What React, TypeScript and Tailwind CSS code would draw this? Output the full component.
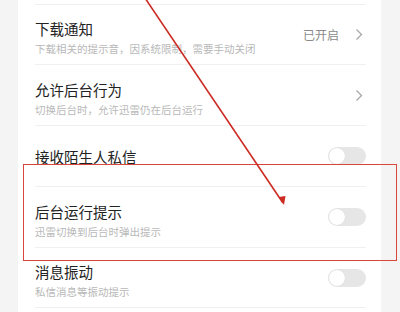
import React from "react";

const Toggle = () => (
  <div className="w-[38px] h-[18px] rounded-full bg-[#e6e6e6] relative shrink-0">
    <div className="absolute left-[1px] top-[1px] w-[16px] h-[16px] rounded-full bg-white shadow-[0_0_1px_rgba(0,0,0,0.15)]" />
  </div>
);

const Chevron = () => (
  <svg width="8" height="13" viewBox="0 0 8 13" className="shrink-0">
    <path d="M1.5 1.5 L6.5 6.5 L1.5 11.5" fill="none" stroke="#a8a8a8" strokeWidth="1.3" />
  </svg>
);

type RowProps = {
  title: string;
  sub?: string;
  right: React.ReactNode;
  h: string;
};

const Row = ({ title, sub, right, h }: RowProps) => (
  <div className={`flex items-center border-b border-[#f0f0f0] ${h}`}>
    <div className={`flex-1 flex flex-col ${sub ? "pt-[6px]" : "pt-[1px]"}`}>
      <div className="text-[14.5px] leading-[20px] text-[#222]">{title}</div>
      {sub && (
        <div className="text-[10.5px] leading-[14px] mt-[3px] text-[#b8b8b8]">{sub}</div>
      )}
    </div>
    {right}
  </div>
);

export default function App() {
  return (
    <div
      className="relative w-[400px] h-[312px] overflow-hidden bg-[#f4f4f4] flex"
      style={{ fontFamily: '"Noto Sans CJK SC", "Noto Sans", sans-serif' }}
    >
      <div className="w-[18px] shrink-0" />
      <div className="w-[363px] bg-white pl-[17px] pr-[15px] flex flex-col">
        <div className="h-[5px] border-b border-[#f0f0f0] shrink-0" />
        <Row
          title="下载通知"
          sub="下载相关的提示音，因系统限制，需要手动关闭"
          h="h-[60px]"
          right={
            <div className="flex items-center gap-[16px] pr-[3px]">
              <span className="text-[12px] text-[#8a8a8a]">已开启</span>
              <Chevron />
            </div>
          }
        />
        <Row
          title="允许后台行为"
          sub="切换后台时，允许迅雷仍在后台运行"
          h="h-[61px]"
          right={
            <div className="pr-[3px]">
              <Chevron />
            </div>
          }
        />
        <Row title="接收陌生人私信" h="h-[61px]" right={<Toggle />} />
        <Row
          title="后台运行提示"
          sub="迅雷切换到后台时弹出提示"
          h="h-[61px]"
          right={<Toggle />}
        />
        <Row
          title="消息振动"
          sub="私信消息等振动提示"
          h="h-[60px]"
          right={<Toggle />}
        />
      </div>

      <div className="absolute left-[23px] top-[164px] w-[374px] h-[97px] border-[1.5px] border-[#d9463d]" />

      <svg className="absolute left-0 top-0" width="400" height="312" viewBox="0 0 400 312">
        <line x1="145" y1="-2" x2="283" y2="203" stroke="#cc2b22" strokeWidth="1.6" />
        <path d="M279 197 L284 205 L285.5 196 Z" fill="#cc2b22" />
      </svg>
    </div>
  );
}
